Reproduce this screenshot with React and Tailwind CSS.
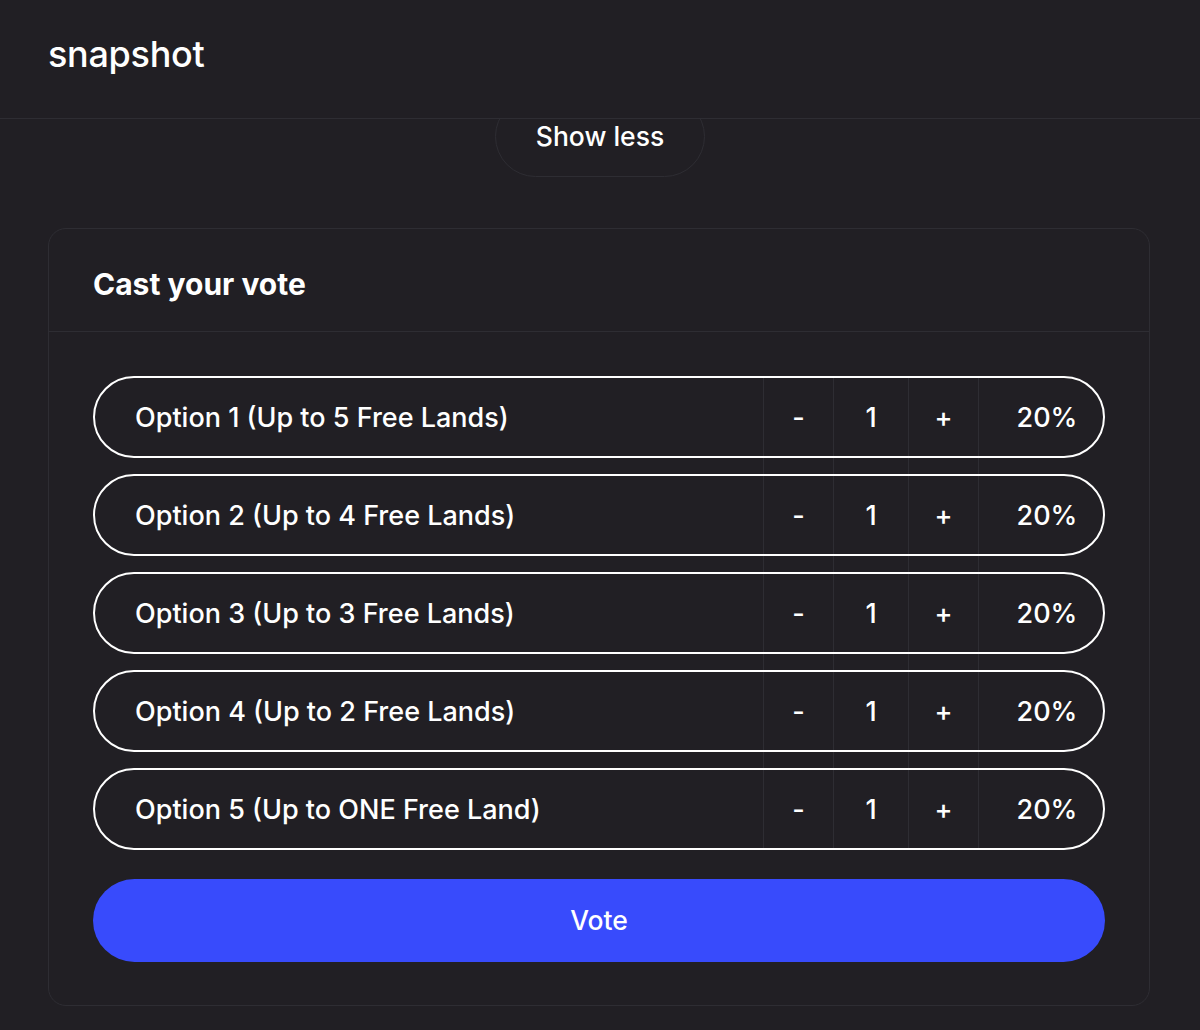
import React from "react";

const options = [
  "Option 1 (Up to 5 Free Lands)",
  "Option 2 (Up to 4 Free Lands)",
  "Option 3 (Up to 3 Free Lands)",
  "Option 4 (Up to 2 Free Lands)",
  "Option 5 (Up to ONE Free Land)",
];

function Spacer() {
  return (
    <div className="flex h-[16px] px-[2px]">
      <div className="flex-1" />
      <div className="w-[70px] border-l border-[#2e2d33]" />
      <div className="w-[75px] border-l border-[#2e2d33]" />
      <div className="w-[70px] border-l border-[#2e2d33]" />
      <div className="w-[125px] border-l border-[#2e2d33]" />
    </div>
  );
}

function Row({ label }) {
  return (
    <div className="flex h-[82px] rounded-full border-2 border-white text-white text-[27px] font-medium">
      <div className="flex flex-1 items-center pl-[40px] pt-[2px]">{label}</div>
      <div className="flex w-[70px] items-center justify-center border-l border-[#2e2d33] pt-[2px]">-</div>
      <div className="flex w-[75px] items-center justify-center border-l border-[#2e2d33] pt-[2px]">1</div>
      <div className="flex w-[70px] items-center justify-center border-l border-[#2e2d33] pt-[2px]">+</div>
      <div className="flex w-[125px] items-center justify-center border-l border-[#2e2d33] pl-[12px] pt-[2px]">20%</div>
    </div>
  );
}

export default function App() {
  return (
    <div
      className="min-h-[1030px] w-[1200px] bg-[#211f24] text-white"
      style={{ fontFamily: "Inter, 'Noto Sans', sans-serif" }}
    >
      <header className="relative z-10 flex h-[119px] items-start border-b border-[#2e2d33] bg-[#211f24] px-[48px] pt-[30px]">
        <span className="text-[36px] font-medium leading-[48px] tracking-[-0.3px]">snapshot</span>
      </header>
      <div className="flex justify-center -mt-[23px]">
        <button className="h-[81px] w-[210px] rounded-full border border-[#2e2d33] pt-[1px] text-[26.5px] font-medium">
          Show less
        </button>
      </div>
      <div className="ml-[48px] mr-[50px] mt-[51px] rounded-[18px] border border-[#2e2d33]">
        <div className="flex h-[103px] items-center border-b border-[#2e2d33] px-[44px] pt-[8px]">
          <h2 className="text-[30px] font-bold">Cast your vote</h2>
        </div>
        <div className="px-[44px] pt-[44px] pb-[43px]">
          <div className="flex flex-col">
            {options.map((o, i) => (
              <React.Fragment key={o}>
                <Row label={o} />
                {i < options.length - 1 && <Spacer />}
              </React.Fragment>
            ))}
          </div>
          <button className="mt-[29px] flex h-[83px] w-full items-center justify-center rounded-full bg-[#384bfc] text-[26.5px] font-medium text-white">
            Vote
          </button>
        </div>
      </div>
    </div>
  );
}
